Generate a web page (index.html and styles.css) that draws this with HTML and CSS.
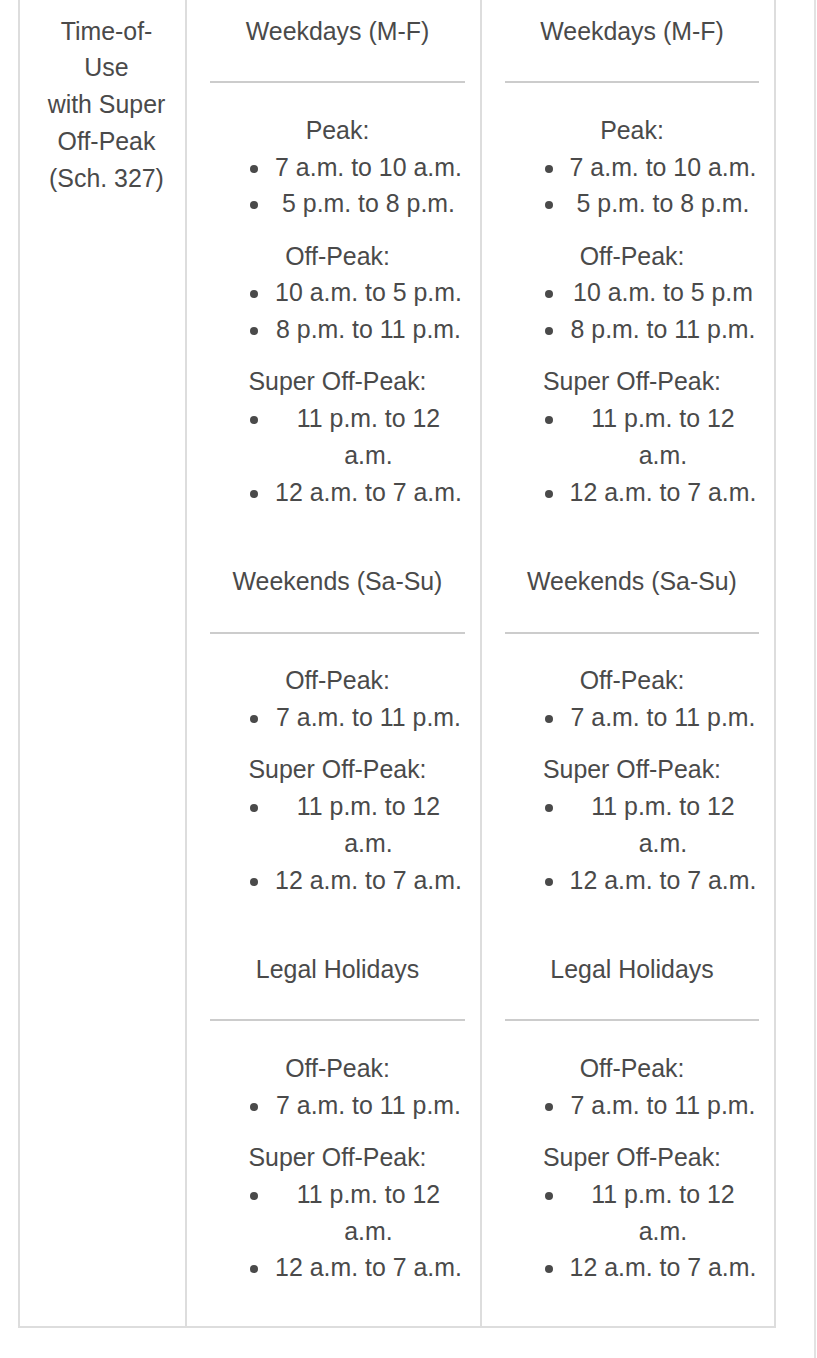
FILE: index.html
```html
<!DOCTYPE html>
<html lang="en">
<head>
<meta charset="utf-8">
<title>Time-of-Use with Super Off-Peak</title>
<link rel="stylesheet" href="styles.css">
</head>
<body>
<div class="page">
  <div class="rates">
    <div class="cell name">Time-of-Use<br>with Super Off-Peak (Sch. 327)</div>

    <div class="cell">
      <div class="group">
        <div class="group-head">Weekdays (M-F)</div>
        <div class="group-body">
          <p class="label">Peak:</p>
          <ul class="times"><li>7 a.m. to 10 a.m.</li><li>5 p.m. to 8 p.m.</li></ul>
          <p class="label">Off-Peak:</p>
          <ul class="times"><li>10 a.m. to 5 p.m.</li><li>8 p.m. to 11 p.m.</li></ul>
          <p class="label">Super Off-Peak:</p>
          <ul class="times"><li>11 p.m. to 12 a.m.</li><li>12 a.m. to 7 a.m.</li></ul>
        </div>
      </div>
      <div class="group">
        <div class="group-head">Weekends (Sa-Su)</div>
        <div class="group-body">
          <p class="label">Off-Peak:</p>
          <ul class="times"><li>7 a.m. to 11 p.m.</li></ul>
          <p class="label">Super Off-Peak:</p>
          <ul class="times"><li>11 p.m. to 12 a.m.</li><li>12 a.m. to 7 a.m.</li></ul>
        </div>
      </div>
      <div class="group">
        <div class="group-head">Legal Holidays</div>
        <div class="group-body">
          <p class="label">Off-Peak:</p>
          <ul class="times"><li>7 a.m. to 11 p.m.</li></ul>
          <p class="label">Super Off-Peak:</p>
          <ul class="times"><li>11 p.m. to 12 a.m.</li><li>12 a.m. to 7 a.m.</li></ul>
        </div>
      </div>
    </div>

    <div class="cell">
      <div class="group">
        <div class="group-head">Weekdays (M-F)</div>
        <div class="group-body">
          <p class="label">Peak:</p>
          <ul class="times"><li>7 a.m. to 10 a.m.</li><li>5 p.m. to 8 p.m.</li></ul>
          <p class="label">Off-Peak:</p>
          <ul class="times"><li>10 a.m. to 5 p.m</li><li>8 p.m. to 11 p.m.</li></ul>
          <p class="label">Super Off-Peak:</p>
          <ul class="times"><li>11 p.m. to 12 a.m.</li><li>12 a.m. to 7 a.m.</li></ul>
        </div>
      </div>
      <div class="group">
        <div class="group-head">Weekends (Sa-Su)</div>
        <div class="group-body">
          <p class="label">Off-Peak:</p>
          <ul class="times"><li>7 a.m. to 11 p.m.</li></ul>
          <p class="label">Super Off-Peak:</p>
          <ul class="times"><li>11 p.m. to 12 a.m.</li><li>12 a.m. to 7 a.m.</li></ul>
        </div>
      </div>
      <div class="group">
        <div class="group-head">Legal Holidays</div>
        <div class="group-body">
          <p class="label">Off-Peak:</p>
          <ul class="times"><li>7 a.m. to 11 p.m.</li></ul>
          <p class="label">Super Off-Peak:</p>
          <ul class="times"><li>11 p.m. to 12 a.m.</li><li>12 a.m. to 7 a.m.</li></ul>
        </div>
      </div>
    </div>
  </div>
</div>
</body>
</html>
```
FILE: styles.css
```css
html, body {
  margin: 0;
  padding: 0;
  background: #fff;
}

body {
  font-family: "Liberation Sans", Arial, sans-serif;
  font-size: 24.9px;
  line-height: 36.85px;
  color: #4a4a4a;
}

.page {
  box-sizing: border-box;
  width: 816px;
  min-height: 1358px;
  padding-left: 18px;
  border-right: 2px solid #e2e2e2;
}

.rates {
  display: grid;
  grid-template-columns: 167px 295px 294px;
  width: 758px;
  box-sizing: border-box;
  border-left: 2px solid #dddddd;
  border-bottom: 2px solid #dddddd;
}

.cell {
  box-sizing: border-box;
  border-right: 2px solid #dddddd;
  padding: 0 15px 0 23px;
  text-align: center;
}

.name {
  padding-top: 12.65px;
}

.group-head {
  padding: 12.65px 0 31.65px;
  border-bottom: 2px solid #cccccc;
}

.group-body {
  padding: 28.65px 0 24.35px;
}

.label {
  margin: 0;
}

.times {
  margin: 0 0 15.3px;
  padding: 0 0 0 62px;
  list-style: disc outside;
}

.times li {
  text-align: center;
}
```
